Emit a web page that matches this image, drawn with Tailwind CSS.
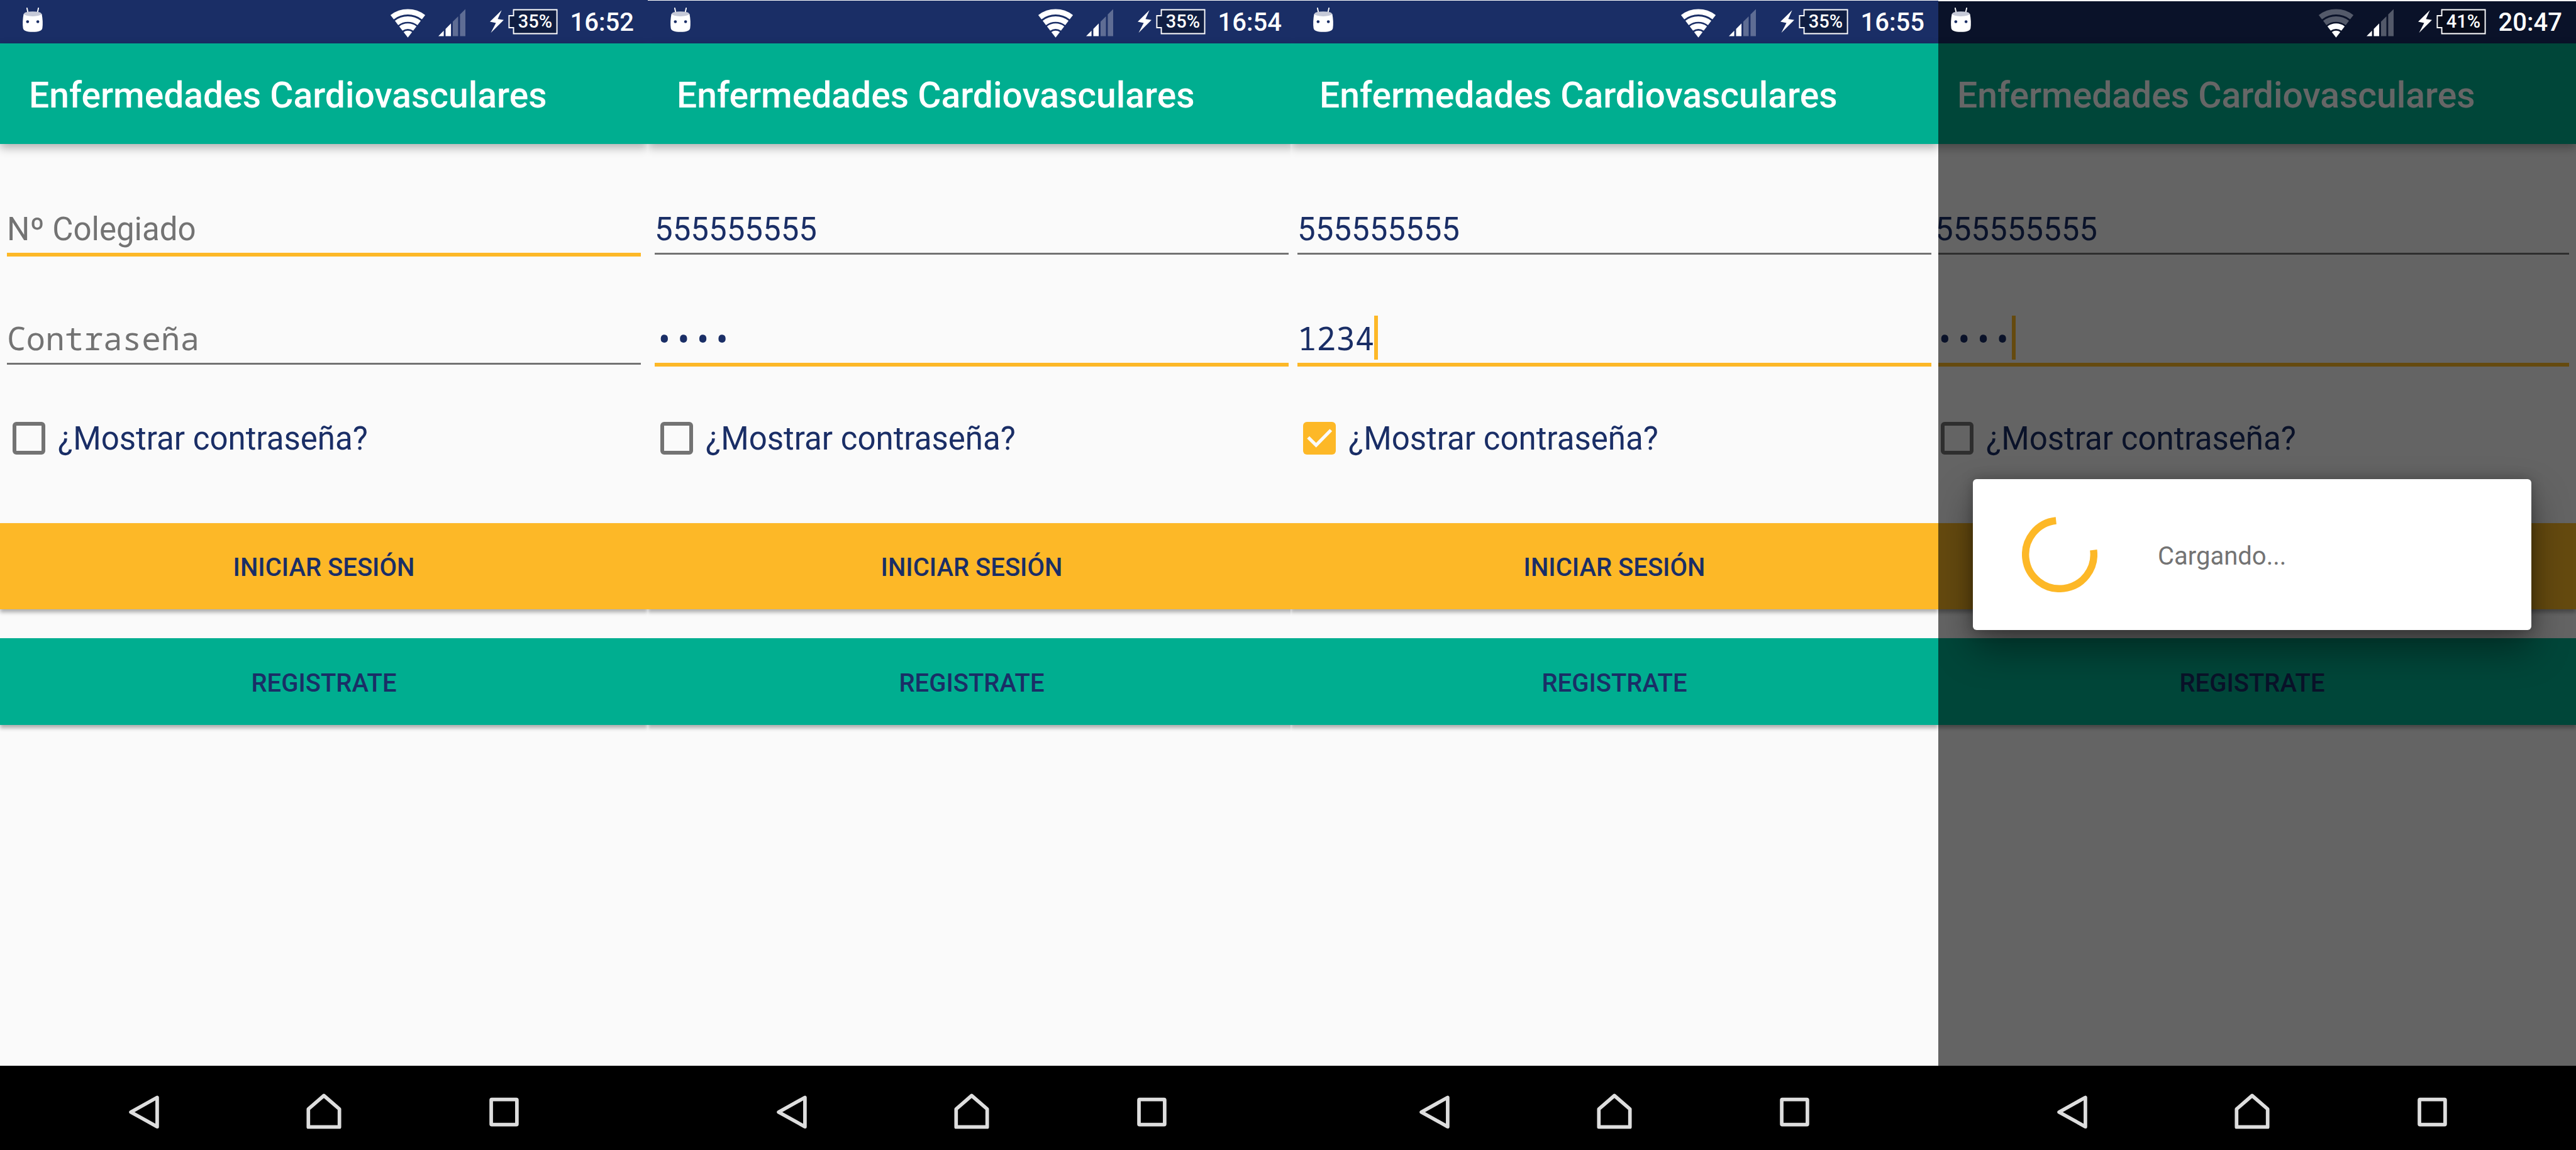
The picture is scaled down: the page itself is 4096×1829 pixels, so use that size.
<!DOCTYPE html>
<html lang="es">
<head>
<meta charset="utf-8">
<meta name="viewport" content="width=device-width, initial-scale=1">
<title>Enfermedades Cardiovasculares</title>
<script src="https://cdn.jsdelivr.net/npm/@tailwindcss/browser@4"></script>
</head>
<body class="bg-[#fafafa] font-['Roboto',sans-serif] text-[#1a2e66]">

<svg class="hidden" aria-hidden="true">
  <symbol id="robot" viewBox="30 0 48 72">
    <path d="M44.500 13.500l2 9M63.500 13.500l-2 9" stroke="#fff" stroke-width="2" stroke-linecap="round"/>
    <path d="M39 23Q54 29 69 23Q71.500 36 70 47Q69 53 54 53Q39 53 38 47Q36.500 36 39 23Z" fill="#fff"/>
    <ellipse cx="54" cy="23" rx="14.500" ry="4" fill="#c6cad8"/>
    <circle cx="45.500" cy="36" r="2.400" fill="#1a2e66"/>
    <circle cx="62.500" cy="36" r="2.400" fill="#1a2e66"/>
  </symbol>
  <symbol id="wifi-outer" viewBox="-30 0 60 72">
    <g fill="none" stroke="#fff" stroke-width="9">
      <path d="M-26.300 28.400A43.200 43.200 0 0 1 26.300 28.400"/>
      <path d="M-18.900 38.100A31 31 0 0 1 18.900 38.100"/>
    </g>
  </symbol>
  <symbol id="wifi-inner" viewBox="-30 0 60 72">
    <path d="M-11.700 47.500A19.200 19.200 0 0 1 11.700 47.500" fill="none" stroke="#fff" stroke-width="9"/>
    <path d="M0 62.700L-7.100 53.400A11.700 11.700 0 0 1 7.100 53.400Z" fill="#fff"/>
  </symbol>
  <symbol id="signal" viewBox="0 0 45 72">
    <path d="M0 60h9v-9zM12 60h9V39l-9 9z" fill="#fff"/>
    <path d="M24 60h9V27l-9 9zM36 60h9V15l-9 9z" fill="#fff" opacity=".3"/>
  </symbol>
  <symbol id="bolt" viewBox="0 0 23 72">
    <path d="M19.500 17L0 36L10 38L1.500 54.500L23 33L13 31.500Z" fill="#fff"/>
  </symbol>
  <symbol id="battery" viewBox="0 0 83 72">
    <path d="M9 16H81.500V56H9V46H1.500V26H9Z" fill="#000" fill-opacity=".35" stroke="#fff" stroke-width="2"/>
  </symbol>
  <symbol id="nav-back" viewBox="0 0 80 80">
    <path d="M62 22.500V71.500L18 47Z" fill="none" stroke="#dedede" stroke-width="6" stroke-linejoin="round"/>
  </symbol>
  <symbol id="nav-home" viewBox="0 0 80 80">
    <path d="M14 72V42L40 19.500L66 42V72Z" fill="none" stroke="#dedede" stroke-width="6" stroke-linejoin="round"/>
  </symbol>
  <symbol id="nav-recent" viewBox="0 0 80 80">
    <rect x="19" y="26" width="43" height="42" rx="1" fill="none" stroke="#dedede" stroke-width="6" stroke-linejoin="round"/>
  </symbol>
</svg>

<div class="grid min-h-screen grid-cols-[1030fr_1022fr_1030fr_1014fr]">

  <!-- Empty form -->
  <section class="flex overflow-hidden">
    <div class="relative flex flex-1 flex-col">
      <div class="flex h-[69px] items-center bg-[#1a2e66] pl-[29px] pr-[22px] text-white">
        <svg class="h-[69px] w-[46px]"><use href="#robot"/></svg>
        <svg class="ml-auto h-[69px] w-[57px]"><use href="#wifi-outer"/><use href="#wifi-inner"/></svg>
        <svg class="ml-5 h-[69px] w-[43px]"><use href="#signal"/></svg>
        <svg class="ml-[39px] h-[69px] w-[22px]"><use href="#bolt"/></svg>
        <div class="relative ml-[7px] mr-5 h-[69px] w-[79px]">
          <svg class="h-[69px] w-[79px]"><use href="#battery"/></svg>
          <span class="absolute inset-0 pl-2 text-center text-[29px] font-medium leading-[69px]">35%</span>
        </div>
        <span class="pt-[3px] text-[40px] font-medium leading-[66px]">16:52</span>
      </div>
      <header class="flex h-[160px] items-center bg-[#00ae90] pl-[46px] pt-1.5 shadow-[0_6px_14px_rgba(0,0,0,0.3)]">
        <h1 class="text-[57px] font-medium leading-[68px] text-white">Enfermedades Cardiovasculares</h1>
      </header>
      <form class="flex flex-1 flex-col">
        <div class="relative mx-[11px] mt-[105px] h-[74px]">
          <input type="text" aria-label="Nº Colegiado" placeholder="Nº Colegiado" class="block h-[74px] w-full border-b-6 border-[#fdb827] pb-2 text-[51px] leading-[60px] outline-none placeholder:text-[#737373]">
        </div>
        <div class="relative mx-[11px] mt-[101px] h-[74px]">
          <input type="text" aria-label="Contraseña" placeholder="Contraseña" class="block h-[71px] w-full border-b-3 border-[#737373] pb-3 font-['Droid_Sans_Mono','Noto_Sans_Mono','DejaVu_Sans_Mono',monospace] text-[51px] leading-[56px] outline-none placeholder:text-[#737373]">
        </div>
        <label class="mt-[84px] flex h-[60px] items-center pl-5 text-[51px] leading-[60px]">
          <input type="checkbox" class="mr-5 size-[52px] appearance-none rounded-[6px] border-6 border-[#737373]"><span class="pt-[2px]">¿Mostrar contraseña?</span>
        </label>
        <button type="button" class="mt-[105px] h-[137px] bg-[#fdb827] pt-[5px] text-[40px] font-medium shadow-[0_5px_6px_rgba(0,0,0,0.3)]">INICIAR SESIÓN</button>
        <button type="button" class="mt-[46px] h-[138px] bg-[#00ae90] pt-[5px] text-[40px] font-medium shadow-[0_5px_6px_rgba(0,0,0,0.3)]">REGISTRATE</button>
      </form>
      <nav class="flex h-[134px] bg-black px-[86px]">
        <button type="button" aria-label="Atrás" class="flex flex-1 items-center justify-center"><svg class="size-[76px]"><use href="#nav-back"/></svg></button>
        <button type="button" aria-label="Inicio" class="flex flex-1 items-center justify-center"><svg class="size-[76px]"><use href="#nav-home"/></svg></button>
        <button type="button" aria-label="Recientes" class="flex flex-1 items-center justify-center"><svg class="size-[76px]"><use href="#nav-recent"/></svg></button>
      </nav>
    </div>
  </section>

  <!-- Filled form, hidden password -->
  <section class="flex overflow-hidden">
    <div class="relative -mr-2 flex flex-1 flex-col">
      <div class="flex h-[69px] items-center bg-[#1a2e66] pl-[29px] pr-[22px] text-white shadow-[inset_0_1px_0_#fff]">
        <svg class="h-[69px] w-[46px]"><use href="#robot"/></svg>
        <svg class="ml-auto h-[69px] w-[57px]"><use href="#wifi-outer"/><use href="#wifi-inner"/></svg>
        <svg class="ml-5 h-[69px] w-[43px]"><use href="#signal"/></svg>
        <svg class="ml-[39px] h-[69px] w-[22px]"><use href="#bolt"/></svg>
        <div class="relative ml-[7px] mr-5 h-[69px] w-[79px]">
          <svg class="h-[69px] w-[79px]"><use href="#battery"/></svg>
          <span class="absolute inset-0 pl-2 text-center text-[29px] font-medium leading-[69px]">35%</span>
        </div>
        <span class="pt-[3px] text-[40px] font-medium leading-[66px]">16:54</span>
      </div>
      <header class="flex h-[160px] items-center bg-[#00ae90] pl-[46px] pt-1.5 shadow-[0_6px_14px_rgba(0,0,0,0.3)]">
        <h1 class="text-[57px] font-medium leading-[68px] text-white">Enfermedades Cardiovasculares</h1>
      </header>
      <form class="flex flex-1 flex-col">
        <div class="relative mx-[11px] mt-[105px] h-[74px]">
          <input type="text" aria-label="Nº Colegiado" value="555555555" class="block h-[71px] w-full border-b-3 border-[#737373] pb-2 text-[51px] leading-[60px] outline-none">
        </div>
        <div class="relative mx-[11px] mt-[101px] h-[74px]">
          <input type="password" aria-label="Contraseña" value="1234" class="block h-[74px] w-full border-b-6 border-[#fdb827] pb-3 font-['Droid_Sans_Mono','Noto_Sans_Mono','DejaVu_Sans_Mono',monospace] text-[51px] leading-[56px] outline-none">
        </div>
        <label class="mt-[84px] flex h-[60px] items-center pl-5 text-[51px] leading-[60px]">
          <input type="checkbox" class="mr-5 size-[52px] appearance-none rounded-[6px] border-6 border-[#737373]"><span class="pt-[2px]">¿Mostrar contraseña?</span>
        </label>
        <button type="button" class="mt-[105px] h-[137px] bg-[#fdb827] pt-[5px] text-[40px] font-medium shadow-[0_5px_6px_rgba(0,0,0,0.3)]">INICIAR SESIÓN</button>
        <button type="button" class="mt-[46px] h-[138px] bg-[#00ae90] pt-[5px] text-[40px] font-medium shadow-[0_5px_6px_rgba(0,0,0,0.3)]">REGISTRATE</button>
      </form>
      <nav class="flex h-[134px] bg-black px-[86px]">
        <button type="button" aria-label="Atrás" class="flex flex-1 items-center justify-center"><svg class="size-[76px]"><use href="#nav-back"/></svg></button>
        <button type="button" aria-label="Inicio" class="flex flex-1 items-center justify-center"><svg class="size-[76px]"><use href="#nav-home"/></svg></button>
        <button type="button" aria-label="Recientes" class="flex flex-1 items-center justify-center"><svg class="size-[76px]"><use href="#nav-recent"/></svg></button>
      </nav>
    </div>
  </section>

  <!-- Filled form, visible password -->
  <section class="flex overflow-hidden">
    <div class="relative flex flex-1 flex-col">
      <div class="flex h-[69px] items-center bg-[#1a2e66] pl-[29px] pr-[22px] text-white shadow-[inset_0_1px_0_#fff]">
        <svg class="h-[69px] w-[46px]"><use href="#robot"/></svg>
        <svg class="ml-auto h-[69px] w-[57px]"><use href="#wifi-outer"/><use href="#wifi-inner"/></svg>
        <svg class="ml-5 h-[69px] w-[43px]"><use href="#signal"/></svg>
        <svg class="ml-[39px] h-[69px] w-[22px]"><use href="#bolt"/></svg>
        <div class="relative ml-[7px] mr-5 h-[69px] w-[79px]">
          <svg class="h-[69px] w-[79px]"><use href="#battery"/></svg>
          <span class="absolute inset-0 pl-2 text-center text-[29px] font-medium leading-[69px]">35%</span>
        </div>
        <span class="pt-[3px] text-[40px] font-medium leading-[66px]">16:55</span>
      </div>
      <header class="flex h-[160px] items-center bg-[#00ae90] pl-[46px] pt-1.5 shadow-[0_6px_14px_rgba(0,0,0,0.3)]">
        <h1 class="text-[57px] font-medium leading-[68px] text-white">Enfermedades Cardiovasculares</h1>
      </header>
      <form class="flex flex-1 flex-col">
        <div class="relative mx-[11px] mt-[105px] h-[74px]">
          <input type="text" aria-label="Nº Colegiado" value="555555555" class="block h-[71px] w-full border-b-3 border-[#737373] pb-2 text-[51px] leading-[60px] outline-none">
        </div>
        <div class="relative mx-[11px] mt-[101px] h-[74px]">
          <input type="text" aria-label="Contraseña" value="1234" class="block h-[74px] w-full border-b-6 border-[#fdb827] pb-3 font-['Droid_Sans_Mono','Noto_Sans_Mono','DejaVu_Sans_Mono',monospace] text-[51px] leading-[56px] outline-none">
          <span class="absolute -top-[7px] left-[122px] h-[70px] w-[6px] bg-[#fdb827]"></span>
        </div>
        <label class="relative mt-[84px] flex h-[60px] items-center pl-5 text-[51px] leading-[60px]">
          <input type="checkbox" checked class="mr-5 size-[52px] appearance-none rounded-[6px] bg-[#fdb827]"><span class="pt-[2px]">¿Mostrar contraseña?</span>
          <svg viewBox="0 0 54 54" class="pointer-events-none absolute left-5 top-1 size-[52px]"><path d="M8.500 25.500L21.500 38.500L46 13.500" fill="none" stroke="#fafafa" stroke-width="5.500"/></svg>
        </label>
        <button type="button" class="mt-[105px] h-[137px] bg-[#fdb827] pt-[5px] text-[40px] font-medium shadow-[0_5px_6px_rgba(0,0,0,0.3)]">INICIAR SESIÓN</button>
        <button type="button" class="mt-[46px] h-[138px] bg-[#00ae90] pt-[5px] text-[40px] font-medium shadow-[0_5px_6px_rgba(0,0,0,0.3)]">REGISTRATE</button>
      </form>
      <nav class="flex h-[134px] bg-black px-[86px]">
        <button type="button" aria-label="Atrás" class="flex flex-1 items-center justify-center"><svg class="size-[76px]"><use href="#nav-back"/></svg></button>
        <button type="button" aria-label="Inicio" class="flex flex-1 items-center justify-center"><svg class="size-[76px]"><use href="#nav-home"/></svg></button>
        <button type="button" aria-label="Recientes" class="flex flex-1 items-center justify-center"><svg class="size-[76px]"><use href="#nav-recent"/></svg></button>
      </nav>
    </div>
  </section>

  <!-- Loading dialog over the form -->
  <section class="flex overflow-hidden">
    <div class="relative -ml-4 flex flex-1 flex-col">
      <div class="flex h-[69px] items-center bg-[#0a1229] pl-[29px] pr-[22px] text-white shadow-[inset_0_2px_0_#fff]">
        <svg class="h-[69px] w-[46px]"><use href="#robot"/></svg>
        <svg class="ml-auto h-[69px] w-[57px]"><use href="#wifi-outer" opacity=".3"/><use href="#wifi-inner"/></svg>
        <svg class="ml-5 h-[69px] w-[43px]"><use href="#signal"/></svg>
        <svg class="ml-[39px] h-[69px] w-[22px]"><use href="#bolt"/></svg>
        <div class="relative ml-[7px] mr-5 h-[69px] w-[79px]">
          <svg class="h-[69px] w-[79px]"><use href="#battery"/></svg>
          <span class="absolute inset-0 pl-2 text-center text-[29px] font-medium leading-[69px]">41%</span>
        </div>
        <span class="pt-[3px] text-[40px] font-medium leading-[66px]">20:47</span>
      </div>
      <div class="relative flex flex-1 flex-col">
        <header class="flex h-[160px] items-center bg-[#00ae90] pl-[46px] pt-1.5 shadow-[0_6px_14px_rgba(0,0,0,0.3)]">
          <h1 class="text-[57px] font-medium leading-[68px] text-white">Enfermedades Cardiovasculares</h1>
        </header>
        <form class="flex flex-1 flex-col">
          <div class="relative mx-[11px] mt-[105px] h-[74px]">
            <input type="text" aria-label="Nº Colegiado" value="555555555" class="block h-[71px] w-full border-b-3 border-[#737373] pb-2 text-[51px] leading-[60px] outline-none">
          </div>
          <div class="relative mx-[11px] mt-[101px] h-[74px]">
            <input type="password" aria-label="Contraseña" value="1234" class="block h-[74px] w-full border-b-6 border-[#fdb827] pb-3 font-['Droid_Sans_Mono','Noto_Sans_Mono','DejaVu_Sans_Mono',monospace] text-[51px] leading-[56px] outline-none">
            <span class="absolute -top-[7px] left-[122px] h-[70px] w-[6px] bg-[#fdb827]"></span>
          </div>
          <label class="mt-[84px] flex h-[60px] items-center pl-5 text-[51px] leading-[60px]">
            <input type="checkbox" class="mr-5 size-[52px] appearance-none rounded-[6px] border-6 border-[#737373]"><span class="pt-[2px]">¿Mostrar contraseña?</span>
          </label>
          <button type="button" aria-label="Iniciar sesión" class="mt-[105px] h-[137px] bg-[#fdb827] shadow-[0_5px_6px_rgba(0,0,0,0.3)]"></button>
          <button type="button" class="mt-[46px] h-[138px] bg-[#00ae90] pt-[5px] text-[40px] font-medium shadow-[0_5px_6px_rgba(0,0,0,0.3)]">REGISTRATE</button>
        </form>
        <div class="absolute inset-0 flex items-center bg-black/60 px-[71px]">
          <div role="dialog" aria-label="Cargando" class="flex h-[240px] flex-1 items-center gap-[96px] rounded-[6px] bg-white pl-[78px] shadow-[0_30px_60px_rgba(0,0,0,0.4),0_0_20px_rgba(0,0,0,0.25)]">
            <svg viewBox="-63 -63 126 126" class="size-[120px]"><path d="M-6 -56.700A57 57 0 1 0 56.500 -7.500" fill="none" stroke="#fdb827" stroke-width="12"/></svg>
            <p class="pt-[5px] text-[40px] text-[#737373]">Cargando...</p>
          </div>
        </div>
      </div>
      <nav class="flex h-[134px] bg-black px-[86px]">
        <button type="button" aria-label="Atrás" class="flex flex-1 items-center justify-center"><svg class="size-[76px]"><use href="#nav-back"/></svg></button>
        <button type="button" aria-label="Inicio" class="flex flex-1 items-center justify-center"><svg class="size-[76px]"><use href="#nav-home"/></svg></button>
        <button type="button" aria-label="Recientes" class="flex flex-1 items-center justify-center"><svg class="size-[76px]"><use href="#nav-recent"/></svg></button>
      </nav>
    </div>
  </section>
</div>
</body>
</html>
